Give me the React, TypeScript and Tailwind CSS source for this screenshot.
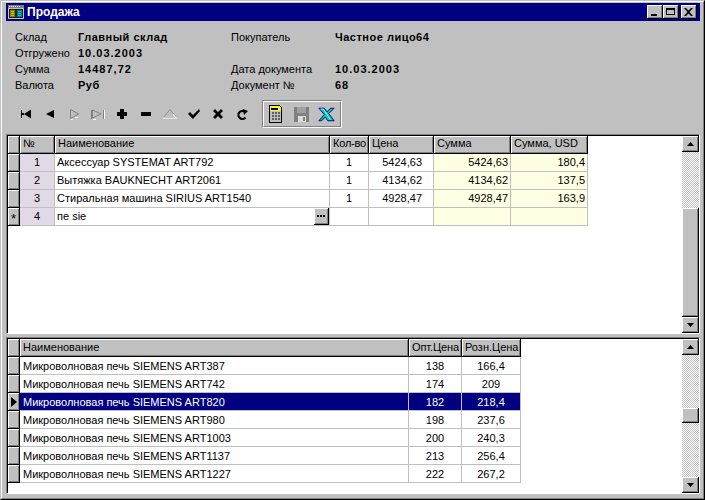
import React from 'react';

const raised = 'border-r border-b border-black bg-[#c0c0c0] shadow-[inset_1px_1px_0_#fff,inset_-1px_-1px_0_#808080]';
const cell = 'border-r border-b border-[#c0c0c0] h-[18px] leading-[17px] shrink-0 whitespace-nowrap overflow-hidden';
const lowCell = 'border-r border-b border-[#c0c0c0] h-[18px] leading-[19px] shrink-0 whitespace-nowrap overflow-hidden';
const head = `${raised} h-full leading-[15px] pl-[3px] shrink-0 whitespace-nowrap overflow-hidden`;
const lowHead = `${raised} h-full leading-[17px] pl-[3px] shrink-0 whitespace-nowrap overflow-hidden`;

const Glyph = ({ children, w = 16, h = 12 }: { children: React.ReactNode; w?: number; h?: number }) => (
  <svg width={w} height={h} viewBox={`0 0 ${w} ${h}`} shapeRendering="crispEdges">
    {children}
  </svg>
);

const navIcons: React.ReactNode[] = [
  <><rect x="3" y="2" width="1" height="8" /><rect x="4" y="5" width="2" height="2" /><polygon points="13,1.5 13,10.5 6,6" shapeRendering="auto" /></>,
  <polygon points="12,2 12,10 4,6" shapeRendering="auto" />,
  <><polygon points="4.5,1.5 4.5,10.5 12.5,6" fill="none" stroke="#808080" shapeRendering="auto" /><path d="M5 11h2M9 9h3" stroke="#fff" /></>,
  <><path d="M1.5 1.5v9M13.5 1.5v9" stroke="#808080" fill="none" /><polygon points="2.5,2 2.5,10 11,6" fill="none" stroke="#808080" shapeRendering="auto" /><path d="M14 2v9M3 11h3" stroke="#fff" /></>,
  <path d="M6 1h4v3h3v4h-3v3H6V8H3V4h3z" />,
  <rect x="3" y="4" width="10" height="4" />,
  <><polygon points="8,1.5 14.5,9.5 1.5,9.5" fill="none" stroke="#909090" shapeRendering="auto" /><path d="M1 10h14M11 6l3 4" stroke="#fff" fill="none" shapeRendering="auto" /></>,
  <path d="M2 6l2-2 3 3 6-6 1 2-7 8z" shapeRendering="auto" />,
  <path d="M3 3l2-2 3 3 3-3 2 2-3 3 3 3-2 2-3-3-3 3-2-2 3-3z" shapeRendering="auto" />,
  <><path d="M11.5 9.5A4 4 0 1 1 10.5 3.5" fill="none" stroke="#000" strokeWidth="2.2" shapeRendering="auto" /><polygon points="9,1 14,3 10,7" shapeRendering="auto" /></>,
];

const Scrollbar = ({ before, thumb, after }: { before: number; thumb: number; after: number }) => {
  const hatch = 'bg-[repeating-conic-gradient(#c0c0c0_0_25%,#ffffff_0_50%)] bg-[length:2px_2px]';
  return (
    <div className="w-[17px] shrink-0 flex flex-col h-full">
      <div className={`${raised} h-[16px] shrink-0 flex items-center justify-center`}>
        <svg width="7" height="4" viewBox="0 0 7 4"><polygon points="3.5,0 7,4 0,4" /></svg>
      </div>
      <div className={hatch} style={{ height: before }} />
      <div className={raised} style={{ height: thumb }} />
      <div className={hatch} style={{ height: after }} />
      <div className={`${raised} h-[16px] shrink-0 flex items-center justify-center`}>
        <svg width="7" height="4" viewBox="0 0 7 4"><polygon points="0,0 7,0 3.5,4" /></svg>
      </div>
    </div>
  );
};

const Frame = ({ className, children }: { className: string; children: React.ReactNode }) => (
  <div className={`border-t border-l border-t-[#808080] border-l-[#808080] border-r border-b border-r-white border-b-white ${className}`}>
    <div className="h-full border-t border-l border-black border-r-0 border-b-0 bg-white flex">{children}</div>
  </div>
);

const Indicator = ({ mark }: { mark?: 'star' | 'arrow' }) => (
  <div className={`${raised} w-[12px] h-[18px] shrink-0 flex items-center justify-center`}>
    {mark === 'star' && <span className="text-[13px] leading-none pt-[3px]">*</span>}
    {mark === 'arrow' && (
      <svg width="6" height="10" viewBox="0 0 6 10"><polygon points="0,0 6,5 0,10" /></svg>
    )}
  </div>
);

const sales = [
  ['1', 'Аксессуар SYSTEMAT ART792', '1', '5424,63', '5424,63', '180,4'],
  ['2', 'Вытяжка BAUKNECHT ART2061', '1', '4134,62', '4134,62', '137,5'],
  ['3', 'Стиральная машина SIRIUS ART1540', '1', '4928,47', '4928,47', '163,9'],
  ['4', 'пе sie', '', '', '', ''],
];

const goods = [
  ['ART387', '138', '166,4'],
  ['ART742', '174', '209'],
  ['ART820', '182', '218,4'],
  ['ART980', '198', '237,6'],
  ['ART1003', '200', '240,3'],
  ['ART1137', '213', '256,4'],
  ['ART1227', '222', '267,2'],
];

const info = [
  ['Склад', 'Главный склад', 'Покупатель', 'Частное лицо64'],
  ['Отгружено', '10.03.2003', '', ''],
  ['Сумма', '14487,72', 'Дата документа', '10.03.2003'],
  ['Валюта', 'Руб', 'Документ №', '68'],
];

// цифры в жирных полях шире, чем буквы
const Value = ({ text, className }: { text: string; className?: string }) => (
  <span className={`font-bold ${/^[\d.,]+$/.test(text) ? 'tracking-[1px]' : 'tracking-[0.5px]'} ${className ?? ''}`}>{text}</span>
);

export default function App() {
  return (
    <div className="w-[705px] h-[500px] bg-[#c0c0c0] border-t border-l border-t-[#c0c0c0] border-l-[#c0c0c0] border-r border-b border-r-black border-b-black text-[11px] text-black font-['Liberation_Sans',sans-serif] overflow-hidden">
      <div className="h-full border-t border-l border-white border-r border-b border-r-[#808080] border-b-[#808080] pt-[1px] pl-[4px] pr-[3px] flex flex-col">
        {/* заголовок */}
        <div className="h-[18px] shrink-0 bg-[#000080] flex items-center pl-[2px] pr-[3px]">
          <svg width="16" height="14" viewBox="0 0 16 14" shapeRendering="crispEdges">
            <rect width="16" height="14" fill="#c0c0c0" />
            <rect x="0" y="0" width="16" height="3" fill="#808080" />
            <path d="M1 1.5h1M3 1.5h1M5 1.5h1M7 1.5h1M9 1.5h1M11 1.5h1" stroke="#fff" />
            <rect x="1" y="4" width="14" height="9" fill="#202020" />
            <rect x="2" y="5" width="5" height="7" fill="#808000" />
            <rect x="9" y="5" width="5" height="7" fill="#008080" />
            <path d="M3 6.5h3M3 8.5h3M3 10.5h3" stroke="#c8c800" />
            <path d="M10 6.5h3M10 8.5h3M10 10.5h3" stroke="#00c8c8" />
          </svg>
          <span className="ml-[3px] text-white font-bold text-[12px]">Продажа</span>
          <div className="ml-auto flex items-center">
            <div className={`${raised} w-[16px] h-[14px] flex items-end pl-[4px] pb-[2px]`}><div className="w-[6px] h-[2px] bg-black" /></div>
            <div className={`${raised} w-[16px] h-[14px] p-[3px]`}><div className="h-full border border-black border-t-2" /></div>
            <div className={`${raised} w-[16px] h-[14px] ml-[2px] flex items-center justify-center`}>
              <svg width="9" height="8" viewBox="0 0 9 8"><path d="M1 0l2.5 2.6L6 0h2L4.5 4 8 8H6L3.5 5.4 1 8H-1l3.5-4L-1 0z" transform="translate(1 0)" /></svg>
            </div>
          </div>
        </div>

        {/* реквизиты документа */}
        <div className="h-[79px] shrink-0 pt-[8px] pl-[9px] flex flex-col">
          {info.map((r, i) => (
            <div key={i} className="h-[16px] flex leading-[16px]">
              <span className="w-[63px]">{r[0]}</span>
              <Value text={r[1]} className="w-[153px]" />
              <span className="w-[104px]">{r[2]}</span>
              <Value text={r[3]} />
            </div>
          ))}
        </div>

        {/* панель кнопок */}
        <div className="h-[34px] shrink-0 flex items-start pl-[8px]">
          <div className="flex h-[28px] items-center">
            {navIcons.map((ic, i) => (
              <div key={i} className="w-[24px] flex justify-center">
                <Glyph>{ic}</Glyph>
              </div>
            ))}
          </div>
          <div className="ml-[8px] w-[80px] h-[28px] border border-t-[#808080] border-l-[#808080] border-r-white border-b-white">
            <div className="h-full border border-t-white border-l-white border-r-[#808080] border-b-[#808080] flex items-center pl-[4px]">
              <svg width="16" height="18" viewBox="0 0 16 18" shapeRendering="crispEdges">
                <path d="M1 0h10l3 3v15H1z" fill="#000" />
                <path d="M2 1h9l2 2v14H2z" fill="#c0c0c0" />
                <path d="M2 1h9l2 2v3H2z" fill="#ffff00" />
                <rect x="3" y="3" width="7" height="2" fill="#000080" />
                <path d="M4 8h2M7 8h2M10 8h2M4 11h2M7 11h2M10 11h2M4 14h2M7 14h2M10 14h2" stroke="#606060" strokeWidth="2" />
              </svg>
              <svg width="15" height="15" viewBox="0 0 15 15" shapeRendering="crispEdges" className="ml-[10px]">
                <rect width="15" height="15" fill="#808080" />
                <rect x="3" y="0" width="9" height="6" fill="#a0a0a0" />
                <rect x="4" y="9" width="8" height="6" fill="#dcdcdc" />
                <rect x="9" y="10" width="2" height="4" fill="#808080" />
              </svg>
              <svg width="17" height="15" viewBox="0 0 19 16" className="ml-[9px]">
                <path d="M1 1h6l3 4 4-4h4l-6 6 6 8h-7l-3-4-4 4H1l6-7z" fill="#00c0c0" stroke="#000060" strokeWidth="1" />
                <path d="M3 2h3l8 12" fill="none" stroke="#c8ffff" strokeWidth="1" />
              </svg>
            </div>
          </div>
        </div>

        {/* строки документа */}
        <Frame className="h-[200px] shrink-0">
          <div className="flex-1 min-w-0 overflow-hidden">
            <div className="flex h-[18px] w-max">
              <div className={`${head} w-[12px]`} />
              <div className={`${head} w-[35px]`}>№</div>
              <div className={`${head} w-[275px]`}>Наименование</div>
              <div className={`${head} w-[39px] pl-[1px] tracking-[-0.2px]`}>Кол-во</div>
              <div className={`${head} w-[65px]`}>Цена</div>
              <div className={`${head} w-[77px]`}>Сумма</div>
              <div className={`${head} w-[77px]`}>Сумма, USD</div>
            </div>
            {sales.map((r, i) => (
              <div key={i} className="flex w-max">
                <Indicator mark={i === 3 ? 'star' : undefined} />
                <div className={`${cell} w-[35px] text-center bg-[#e2d9e6]`}>{r[0]}</div>
                <div className={`${cell} w-[275px] pl-[2px] flex justify-between`}>
                  <span>{r[1]}</span>
                  {i === 3 && (
                    <div className={`${raised} w-[15px] h-[17px] flex items-center justify-center gap-[1px]`}>
                      <i className="w-[2px] h-[2px] bg-black" /><i className="w-[2px] h-[2px] bg-black" /><i className="w-[2px] h-[2px] bg-black" />
                    </div>
                  )}
                </div>
                <div className={`${cell} w-[39px] text-center`}>{r[2]}</div>
                <div className={`${cell} w-[65px] text-right pr-[11px]`}>{r[3]}</div>
                <div className={`${cell} w-[77px] text-right pr-[2px] bg-[#ffffe3]`}>{r[4]}</div>
                <div className={`${cell} w-[77px] text-right pr-[2px] bg-[#ffffe3]`}>{r[5]}</div>
              </div>
            ))}
          </div>
          <Scrollbar before={56} thumb={109} after={0} />
        </Frame>

        {/* справочник товаров */}
        <Frame className="h-[157px] mt-[3px] shrink-0">
          <div className="flex-1 min-w-0 overflow-hidden">
            <div className="flex h-[18px] w-max">
              <div className={`${lowHead} w-[12px]`} />
              <div className={`${lowHead} w-[389px]`}>Наименование</div>
              <div className={`${lowHead} w-[53px] pl-[2px] tracking-[-0.1px]`}>Опт.Цена</div>
              <div className={`${lowHead} w-[59px] pl-[2px]`}>Розн.Цена</div>
            </div>
            {goods.map((r, i) => {
              const active = i === 2;
              const c = active ? 'bg-[#000080] text-white' : '';
              return (
                <div key={i} className="flex w-max">
                  <Indicator mark={active ? 'arrow' : undefined} />
                  <div className={`${lowCell} w-[389px] pl-[3px] ${c}`}>Микроволновая печь SIEMENS {r[0]}</div>
                  <div className={`${lowCell} w-[53px] text-center ${c}`}>{r[1]}</div>
                  <div className={`${lowCell} w-[59px] text-center ${c}`}>{r[2]}</div>
                </div>
              );
            })}
          </div>
          <Scrollbar before={53} thumb={15} after={54} />
        </Frame>
      </div>
    </div>
  );
}
